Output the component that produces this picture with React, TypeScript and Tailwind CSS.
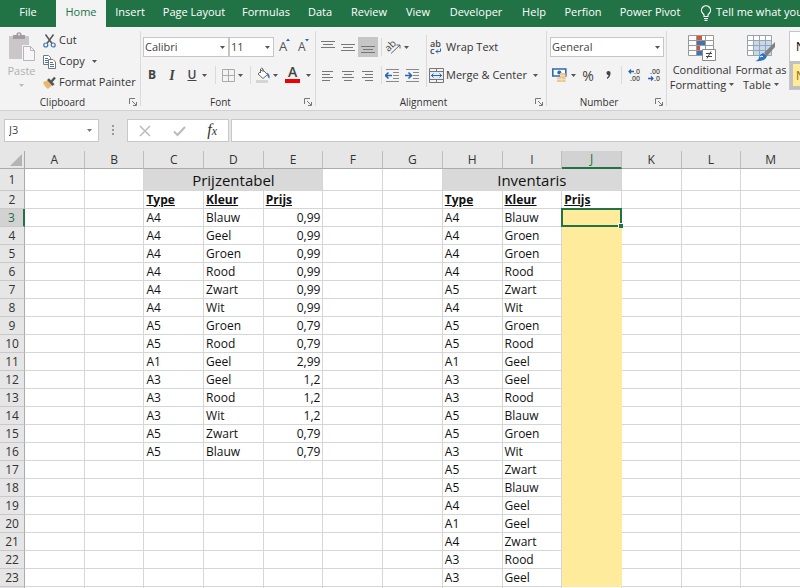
import clsx from 'clsx'
import React, { useState } from 'react'

const tabs = [
  { name: 'File', width: 'w-14' },
  { name: 'Home', width: 'w-[50px]' },
  { name: 'Insert', width: 'w-12' },
  { name: 'Page Layout', width: 'w-20' },
  { name: 'Formulas', width: 'w-16' },
  { name: 'Data', width: 'w-11' },
  { name: 'Review', width: 'w-[54px]' },
  { name: 'View', width: 'w-11' },
  { name: 'Developer', width: 'w-[72px]' },
  { name: 'Help', width: 'w-11' },
  { name: 'Perfion', width: 'w-[54px]' },
  { name: 'Power Pivot', width: 'w-20' },
]

const columns = ['A', 'B', 'C', 'D', 'E', 'F', 'G', 'H', 'I', 'J', 'K', 'L', 'M']

const prices = [
  ['A4', 'Blauw', '0,99'],
  ['A4', 'Geel', '0,99'],
  ['A4', 'Groen', '0,99'],
  ['A4', 'Rood', '0,99'],
  ['A4', 'Zwart', '0,99'],
  ['A4', 'Wit', '0,99'],
  ['A5', 'Groen', '0,79'],
  ['A5', 'Rood', '0,79'],
  ['A1', 'Geel', '2,99'],
  ['A3', 'Geel', '1,2'],
  ['A3', 'Rood', '1,2'],
  ['A3', 'Wit', '1,2'],
  ['A5', 'Zwart', '0,79'],
  ['A5', 'Blauw', '0,79'],
]

const inventory = [
  ['A4', 'Blauw'],
  ['A4', 'Groen'],
  ['A4', 'Groen'],
  ['A4', 'Rood'],
  ['A5', 'Zwart'],
  ['A4', 'Wit'],
  ['A5', 'Groen'],
  ['A5', 'Rood'],
  ['A1', 'Geel'],
  ['A3', 'Geel'],
  ['A3', 'Rood'],
  ['A5', 'Blauw'],
  ['A5', 'Groen'],
  ['A3', 'Wit'],
  ['A5', 'Zwart'],
  ['A5', 'Blauw'],
  ['A4', 'Geel'],
  ['A1', 'Geel'],
  ['A4', 'Zwart'],
  ['A3', 'Rood'],
  ['A3', 'Geel'],
]

const Caret: React.FC<{ className?: string }> = ({ className }) => (
  <svg viewBox="0 0 5 3" className={clsx('h-[3px] w-[5px] shrink-0', className ?? 'text-[#555]')}>
    <path d="M0 0h5L2.500 3z" fill="currentColor" />
  </svg>
)

const Launcher: React.FC<{ label: string }> = ({ label }) => (
  <button aria-label={label} className="absolute right-1 bottom-1">
    <svg viewBox="0 0 8 8" className="h-2 w-2" fill="none" stroke="#777">
      <path d="M.5 6V.5H6M3 3l4 4M7.500 4v3.500H4" />
    </svg>
  </button>
)

type GroupProps = { title: string; className?: string; children: React.ReactNode }

const Group: React.FC<GroupProps> = ({ title, className, children }) => (
  <section className={clsx('relative flex shrink-0 flex-col', className)}>
    <div className="h-[67px]">{children}</div>
    <h2 className="pr-4 text-center text-[10px] leading-4 text-[#333]">{title}</h2>
    <Launcher label={`${title} settings`} />
    <span className="absolute top-1 right-0 bottom-1 w-px bg-[#dadada]" />
  </section>
)

const Divider = () => <span className="h-[18px] w-px bg-[#dadada]" />

// lines of a paragraph icon, as [x, width] per row
const Lines: React.FC<{ rows: [number, number][]; className?: string }> = ({ rows, className }) => (
  <svg viewBox="0 0 14 14" className={clsx('h-3.5 w-3.5', className)}>
    {rows.map(([x, w], i) => (
      <rect key={i} x={x} y={i * 3 + 1} width={w} height="1" fill="#777" />
    ))}
  </svg>
)

const BulbIcon = () => (
  <svg viewBox="0 0 12 16" className="h-4 w-3" fill="none" stroke="#fff" strokeWidth="1.200">
    <path d="M4 11.500V10Q3.800 9 2.600 8.200A4.500 4.500 0 1 1 9.400 8.200Q8.200 9 8 10V11.500Z" />
    <path d="M4 13.500H8M4.500 15.300H7.500" />
  </svg>
)

const PasteIcon = () => (
  <svg viewBox="0 0 28 30" className="h-[30px] w-7">
    <path d="M1 4h20v23H1z" fill="#cac6ca" />
    <path d="M5 3h3.500V1.500Q11 -1 13.500 1.500V3H17v4H5z" fill="#a09ca0" />
    <circle cx="11" cy="2.500" r="1" fill="#eee" />
    <path d="M14 13h10l4 4v13H14z" fill="#f3f3f3" />
    <path d="M15.500 14.500h7l4 4v10h-11z" fill="#f8f6f8" stroke="#b9b5b9" />
    <path d="M22.500 14.500v4h4" fill="none" stroke="#b9b5b9" />
  </svg>
)

const CutIcon = () => (
  <svg viewBox="0 0 13 14" className="h-3.5 w-[13px]" fill="none">
    <path d="M2.500 .5L9 9.500M10.500 .5L4 9.500" stroke="#555" strokeWidth="1.500" />
    <circle cx="2.800" cy="11" r="2" stroke="#4377b5" strokeWidth="1.200" />
    <circle cx="10.200" cy="11" r="2" stroke="#4377b5" strokeWidth="1.200" />
  </svg>
)

const CopyIcon = () => (
  <svg viewBox="0 0 13 14" className="h-3.5 w-[13px]" fill="#fff">
    <path d="M.5 .5h5l2 2v7h-7z" stroke="#777" />
    <path d="M2 3.500h3M2 5.500h3M2 7.500h3" stroke="#4377b5" />
    <path d="M5.500 4.500h4.500l2.500 2.500v6.500h-7z" stroke="#777" />
    <path d="M7 7.500h3M7 9.500h4M7 11.500h4" stroke="#4377b5" />
  </svg>
)

const PainterIcon = () => (
  <svg viewBox="0 0 13 13" className="h-[13px] w-[13px]">
    <path d="M0 6l4.500-1.500 4.500 5-4 3.500Q1.500 11 0 6z" fill="#e8b96c" />
    <path d="M4 4l2-1.800 5.500 6L9.500 10z" fill="#555" />
    <path d="M8.500 5.500l3.500-4" stroke="#555" strokeWidth="2.400" />
  </svg>
)

const BordersIcon = () => (
  <svg viewBox="0 0 13 13" className="h-[13px] w-[13px]" fill="none" stroke="#aaa">
    <path d="M.5 .5h12v12H.5zM6.500 1v11M1 6.500h11" />
  </svg>
)

const FillIcon = () => (
  <svg viewBox="0 0 14 16" className="h-4 w-3.5" fill="none">
    <path d="M6.500 2.500l5 5-4.500 4-5-4.500z" fill="#fff" stroke="#666" />
    <path d="M4.500 6V2Q5.500 0 7 2v3" stroke="#666" />
    <path d="M11 5.500q3.500 2 2.500 6-2.500-1-2.500-6z" fill="#4377b5" />
    <path d="M0 13h12v3H0z" fill="#d5d5d5" />
  </svg>
)

const OrientationIcon = () => (
  <svg viewBox="0 0 18 16" className="h-4 w-[18px]" fill="none" stroke="#666">
    <text x="1" y="11" transform="rotate(-45 5 9)" fontSize="10" fill="#444" stroke="none">
      ab
    </text>
    <path d="M6 14.500L15 6M11.500 6H15V9.500" />
  </svg>
)

const IndentIcon: React.FC<{ outdent?: boolean }> = ({ outdent }) => (
  <svg viewBox="0 0 15 13" className="h-[13px] w-[15px]" fill="none">
    <path d="M1 .5h13M8 3.500h6M8 6.500h6M8 9.500h6M1 12.500h13" stroke="#888" />
    <path
      d={outdent ? 'M7 6.500H1M3.500 3.500l-3 3 3 3' : 'M0 6.500h6M3.500 3.500l3 3-3 3'}
      stroke="#2b65b0"
      strokeWidth="1.600"
    />
  </svg>
)

const WrapIcon = () => (
  <svg viewBox="0 0 13 15" className="h-[15px] w-[13px]">
    <text x="1" y="7" fontSize="9" fontWeight="600" fill="#444">
      ab
    </text>
    <text x="1" y="14" fontSize="9" fontWeight="600" fill="#444">
      c
    </text>
    <path d="M11.500 8.500v3H7M9 9.500l-2 2 2 2" fill="none" stroke="#2b65b0" />
  </svg>
)

const MergeIcon = () => (
  <svg viewBox="0 0 15 15" className="h-[15px] w-[15px]" fill="none">
    <path d="M.5 .5h14v14H.5zM.5 3.500h14M.5 11.500h14M7.500 .5v3M7.500 11.500v3" stroke="#777" />
    <path d="M1 4h13v7H1z" fill="#e3edf8" />
    <path d="M2 7.500h11M4.500 5.500l-2 2 2 2M10.500 5.500l2 2-2 2" stroke="#2b65b0" />
  </svg>
)

const MoneyIcon = () => (
  <svg viewBox="0 0 15 14" className="h-3.5 w-[15px]">
    <path d="M.8 1h13v7H.8z" fill="#fff" stroke="#2f68b4" strokeWidth="1.600" />
    <circle cx="7.300" cy="4.500" r="2" fill="#2f68b4" />
    <path d="M8 5h5.500v9H5V9.500h3z" fill="#ecc891" />
    <path d="M8 7.500h5.500M5 11.500h8.500M9.500 9.500v4" stroke="#f8ead2" strokeWidth=".7" />
  </svg>
)

const DecimalIcon: React.FC<{ decrease?: boolean }> = ({ decrease }) => (
  <svg viewBox="0 0 13 14" className="h-3.5 w-[13px]">
    <text x={decrease ? 2 : 6} y="6" fontSize="7" fontWeight="600" fill="#555">
      {decrease ? '.00' : '.0'}
    </text>
    <text x={decrease ? 6 : 2} y="13" fontSize="7" fontWeight="600" fill="#555">
      {decrease ? '.0' : '.00'}
    </text>
    <path
      d={decrease ? 'M0 10.500h5M3 8.500l2 2-2 2' : 'M1 3.500h5M3 1.500l-2 2 2 2'}
      fill="none"
      stroke="#2b65b0"
      strokeWidth="1.300"
    />
  </svg>
)

const ConditionalIcon = () => (
  <svg viewBox="0 0 28 27" className="h-[27px] w-7">
    <path d="M.5 .5h25v20H.5z" fill="#fff" />
    <path d="M8 1h6v5H8zM8 11h4v5H8z" fill="#d9532c" />
    <path d="M8 6h9v5H8zM8 16h6v5H8z" fill="#3c75ba" />
    <path
      d="M.5 .5h25v20H.5zM.5 5.500h25M.5 10.500h25M.5 15.500h25M8.500 .5v20M17.500 .5v20"
      fill="none"
      stroke="#999"
    />
    <path d="M14.500 14.500h13v11h-13z" fill="#fff" stroke="#888" />
    <path d="M18 18.500h6M18 21.500h6M23 16.500l-4 7" stroke="#444" />
  </svg>
)

const TableIcon = () => (
  <svg viewBox="0 0 29 27" className="h-[27px] w-[29px]">
    <path d="M.5 .5h24v20H.5z" fill="#fff" />
    <path d="M6 6h19v15H6z" fill="#c3d9ee" />
    <path
      d="M.5 .5h24v20H.5zM.5 5.500h24M.5 10.500h24M.5 15.500h24M6.500 .5v20M12.500 .5v20M18.500 .5v20"
      fill="none"
      stroke="#9aa3ac"
    />
    <path d="M28 7v5l-8 9-3-3z" fill="#808080" />
    <path d="M16 18l4 3q-2 6-12 5 4-1 4-4 1-3 4-4z" fill="#2f73bd" />
    <path d="M13 22l2-1 1 1" stroke="#fff" fill="none" />
  </svg>
)

type SelectProps = { label: string; value: string; className: string }

const Select: React.FC<SelectProps> = ({ label, value, className }) => (
  <span className={clsx('relative flex items-center', className)}>
    <select
      aria-label={label}
      className="h-5 w-full appearance-none border border-[#c6c6c6] bg-white px-px text-[11px] leading-[18px] text-[#444] outline-none"
    >
      <option>{value}</option>
    </select>
    <Caret className="pointer-events-none absolute right-1 text-[#555]" />
  </span>
)

const iconButton = 'flex h-5 w-5 shrink-0 items-center justify-center'

const Ribbon = () => (
  <div className="flex h-[84px] shrink-0 overflow-hidden border-b border-[#d0d0d0] bg-[#f3f3f3]">
    <Group title="Clipboard" className="w-[141px]">
      <div className="flex gap-1 pt-[3px]">
        <button className="flex w-[39px] flex-col items-center pt-0.5 pl-1 text-[11px] text-[#b0b0b0]">
          <PasteIcon />
          <span className="leading-[18px]">Paste</span>
          <Caret className="mt-1 text-[#bbb]" />
        </button>
        <div className="flex flex-col text-[11px] text-[#333]">
          <button className="flex h-[21px] items-center gap-[3px]">
            <CutIcon />
            Cut
          </button>
          <button className="flex h-[21px] items-center gap-[3px]">
            <CopyIcon />
            Copy
            <Caret className="ml-1 text-[#555]" />
          </button>
          <button className="flex h-[21px] items-center gap-[3px]">
            <PainterIcon />
            <span className="whitespace-nowrap">Format Painter</span>
          </button>
        </div>
      </div>
    </Group>

    <Group title="Font" className="w-[175px]">
      <div className="flex pt-2.5 pl-0.5">
        <Select label="Font name" value="Calibri" className="w-[86px]" />
        <Select label="Font size" value="11" className="w-[45px]" />
        <button aria-label="Increase font size" className={iconButton}>
          <svg viewBox="0 0 14 20" className="h-5 w-3.5">
            <text x="2" y="14" fontSize="13" fontWeight="500" fill="#555">
              A
            </text>
            <path d="M9 4l2-2.500L13 4z" fill="#2b65b0" />
          </svg>
        </button>
        <button aria-label="Decrease font size" className={iconButton}>
          <svg viewBox="0 0 14 20" className="h-5 w-3.5">
            <text x="1" y="14" fontSize="12" fontWeight="500" fill="#555">
              A
            </text>
            <path d="M8 2l2 2.500L12 2z" fill="#2b65b0" />
          </svg>
        </button>
      </div>
      <div className="flex items-center pt-2 pl-px text-[12px] text-[#444]">
        <button className={clsx(iconButton, 'font-bold')}>B</button>
        <button className={clsx(iconButton, "font-['Liberation_Serif',serif] text-[14px] font-bold italic")}>
          I
        </button>
        <button className={clsx(iconButton, 'font-semibold underline')}>U</button>
        <Caret />
        <span className="w-2" />
        <Divider />
        <button aria-label="Borders" className={clsx(iconButton, 'ml-0.5')}>
          <BordersIcon />
        </button>
        <Caret />
        <span className="w-[7px]" />
        <Divider />
        <button aria-label="Fill colour" className={clsx(iconButton, 'ml-0.5')}>
          <FillIcon />
        </button>
        <Caret />
        <button aria-label="Font colour" className={clsx(iconButton, 'mx-1')}>
          <svg viewBox="0 0 15 20" className="h-5 w-[15px]">
            <text x="3" y="12" fontSize="14" fontWeight="600" fill="#444">
              A
            </text>
            <path d="M0 14h15v4H0z" fill="#f00000" />
          </svg>
        </button>
        <Caret />
      </div>
    </Group>

    <Group title="Alignment" className="w-[231px]">
      <div className="flex gap-0.5">
        <div>
          <div className="flex items-center pt-2.5 pl-0.5">
            <button aria-label="Top align" className={iconButton}>
              <Lines rows={[[0, 14], [2, 10], [0, 14]]} />
            </button>
            <button aria-label="Middle align" className={iconButton}>
              <Lines rows={[[0, 14], [2, 10], [0, 14]]} className="mt-1.5" />
            </button>
            <button aria-label="Bottom align" className={clsx(iconButton, 'bg-[#c6c6c6]')}>
              <Lines rows={[[0, 14], [2, 10], [0, 14]]} className="mt-2.5" />
            </button>
            <span className="w-[3px]" />
            <Divider />
            <button aria-label="Orientation" className={clsx(iconButton, 'ml-0.5')}>
              <OrientationIcon />
            </button>
            <Caret />
          </div>
          <div className="flex items-center pt-2 pl-0.5">
            <button aria-label="Align left" className={iconButton}>
              <Lines rows={[[1, 11], [1, 8], [1, 11], [1, 8]]} className="mt-1" />
            </button>
            <button aria-label="Center" className={iconButton}>
              <Lines rows={[[1, 12], [3, 8], [1, 12], [3, 8]]} className="mt-1" />
            </button>
            <button aria-label="Align right" className={iconButton}>
              <Lines rows={[[1, 11], [4, 8], [1, 11], [4, 8]]} className="mt-1" />
            </button>
            <span className="w-[3px]" />
            <Divider />
            <button aria-label="Decrease indent" className={iconButton}>
              <IndentIcon outdent />
            </button>
            <button aria-label="Increase indent" className={iconButton}>
              <IndentIcon />
            </button>
          </div>
        </div>
        <span className="mt-2 ml-0.5 h-[52px] w-px bg-[#dadada]" />
        <div className="flex flex-col gap-2 pt-2.5 text-[11px] text-[#333]">
          <button className="flex h-5 items-center gap-1 whitespace-nowrap">
            <WrapIcon />
            Wrap Text
          </button>
          <button className="flex h-5 items-center gap-0.5 whitespace-nowrap">
            <MergeIcon />
            Merge & Center
            <Caret className="ml-1 text-[#555]" />
          </button>
        </div>
      </div>
    </Group>

    <Group title="Number" className="w-[120px]">
      <div className="px-[3px] pt-2.5">
        <Select label="Number format" value="General" className="w-full" />
      </div>
      <div className="flex items-center pt-2 pl-0.5 text-[#444]">
        <button aria-label="Accounting format" className={iconButton}>
          <MoneyIcon />
        </button>
        <span className="w-0.5" />
        <Caret />
        <button className={clsx(iconButton, 'ml-0.5 text-[14px]')}>%</button>
        <button aria-label="Comma style" className={iconButton}>
          <svg viewBox="0 0 5 8" className="h-2 w-[5px]">
            <path d="M2.500 0a2 2 0 012 2.200Q4.500 6 1 8V6.500Q2.500 5.500 2.500 4.200A2 2 0 012.500 0z" fill="#444" />
          </svg>
        </button>
        <span className="w-[3px]" />
        <Divider />
        <button aria-label="Increase decimal" className={clsx(iconButton, 'ml-0.5')}>
          <DecimalIcon />
        </button>
        <button aria-label="Decrease decimal" className={iconButton}>
          <DecimalIcon decrease />
        </button>
      </div>
    </Group>

    <div className="flex flex-1 gap-0.5 pt-2 pl-1 text-[11px] leading-[15px] text-[#333]">
      <button className="flex w-[62px] shrink-0 flex-col items-center">
        <ConditionalIcon />
        <span>Conditional</span>
        <span className="flex items-center gap-[3px]">
          Formatting <Caret />
        </span>
      </button>
      <button className="flex w-[52px] shrink-0 flex-col items-center">
        <TableIcon />
        <span className="whitespace-nowrap">Format as</span>
        <span className="flex items-center gap-[3px]">
          Table <Caret />
        </span>
      </button>
      <div className="-mt-1 h-[59px] w-40 shrink-0 border border-[#c6c6c6] bg-white text-[12px]">
        <button className="block h-[29px] w-full pl-1.5 text-left text-black">Normal</button>
        <button className="block h-7 w-full border-[3px] border-[#c0c0c0] bg-[#ffeb9c] pl-[3px] text-left text-[#9c6500]">
          Neutral
        </button>
      </div>
    </div>
  </div>
)

const FormulaBar = () => (
  <div className="flex h-10 shrink-0 items-start bg-[#e6e6e6] pt-2 pl-1">
    <div className="flex h-[23px] w-[95px] items-center border border-[#c8c8c8] bg-white px-1">
      <input
        aria-label="Name box"
        defaultValue="J3"
        className="w-full min-w-0 bg-transparent text-[11px] text-[#444] outline-none"
      />
      <Caret className="mr-0.5 text-[#777]" />
    </div>
    <svg viewBox="0 0 28 23" className="h-[23px] w-7" fill="#999">
      <path d="M13 6h2v2h-2zM13 10h2v2h-2zM13 14h2v2h-2z" />
    </svg>
    <div className="flex h-[23px] w-[102px] items-center justify-around border border-[#c8c8c8] bg-white">
      <button aria-label="Cancel">
        <svg viewBox="0 0 12 12" className="h-3 w-3" stroke="#bbb" strokeWidth="1.500">
          <path d="M1 1l10 10M11 1L1 11" />
        </svg>
      </button>
      <button aria-label="Enter">
        <svg viewBox="0 0 13 12" className="h-3 w-[13px]" fill="none" stroke="#bbb" strokeWidth="2">
          <path d="M1 6.500L4.500 10L12 2" />
        </svg>
      </button>
      <button className="font-['Liberation_Serif',serif] text-[16px] leading-5 text-[#333] italic">
        f<span className="text-[12px]">x</span>
      </button>
    </div>
    <input
      aria-label="Formula"
      className="ml-0.5 h-[23px] min-w-0 flex-1 border border-r-0 border-[#c8c8c8] bg-white px-1 text-[11px] outline-none"
    />
  </div>
)

const grid = 'border-r border-b border-[#d6d6d6] px-0.5 py-0 whitespace-nowrap'
const yellow = 'border-r border-b border-[#ffeb9c] bg-[#ffeb9c] p-0'
const heading = 'text-left font-bold underline'

const RowNumber: React.FC<{ n: number; active?: boolean }> = ({ n, active }) => (
  <th
    scope="row"
    className={clsx(
      'border-b border-b-[#c9c9c9] p-0 text-center text-[12px] font-normal',
      active
        ? 'border-r-2 border-r-[#217346] bg-[#d2d2d2] text-[#217346]'
        : 'border-r border-r-[#ababab] bg-[#e6e6e6] text-[#333]'
    )}
  >
    {n}
  </th>
)

const Empty: React.FC<{ count: number }> = ({ count }) => (
  <>
    {Array.from({ length: count }, (_, i) => (
      <td key={i} className={grid} />
    ))}
  </>
)

const Sheet = () => (
  <div className="min-h-0 flex-1 overflow-hidden">
    <table className="w-[calc(100%+1px)] table-fixed border-separate border-spacing-0 font-['Open_Sans',sans-serif] text-[12px] leading-4 text-[#111]">
      <colgroup>
        <col className="w-[25px]" />
        {columns.map((c) => (
          <col key={c} />
        ))}
      </colgroup>
      <thead>
        <tr className="h-[18px] bg-[#e6e6e6] text-[#333]">
          <th aria-label="Select all" className="border-r border-b border-[#ababab] p-0">
            <svg viewBox="0 0 12 12" className="ml-auto h-3 w-3.5 pr-0.5">
              <path d="M12 0v12H0z" fill="#b4b4b4" />
            </svg>
          </th>
          {columns.map((c) => (
            <th
              key={c}
              scope="col"
              className={clsx(
                'border-r border-r-[#bdbdbd] p-0 font-normal',
                c === 'J'
                  ? 'border-b-2 border-b-[#217346] bg-[#d2d2d2] text-[#217346]'
                  : 'border-b border-b-[#ababab]'
              )}
            >
              {c}
            </th>
          ))}
        </tr>
      </thead>
      <tbody>
        <tr className="h-[22px] text-center text-[15px] leading-5">
          <RowNumber n={1} />
          <Empty count={2} />
          <td colSpan={3} className={clsx(grid, 'bg-[#d9d9d9]')}>
            Prijzentabel
          </td>
          <Empty count={2} />
          <td colSpan={3} className={clsx(grid, 'bg-[#d9d9d9]')}>
            Inventaris
          </td>
          <Empty count={3} />
        </tr>
        <tr className="h-[18px]">
          <RowNumber n={2} />
          <Empty count={2} />
          <td className={clsx(grid, heading)}>Type</td>
          <td className={clsx(grid, heading)}>Kleur</td>
          <td className={clsx(grid, heading)}>Prijs</td>
          <Empty count={2} />
          <td className={clsx(grid, heading)}>Type</td>
          <td className={clsx(grid, heading)}>Kleur</td>
          <td className={clsx(grid, heading)}>Prijs</td>
          <Empty count={3} />
        </tr>
        {inventory.map(([type, color], i) => {
          const price = prices[i] ?? ['', '', '']
          return (
            <tr key={i} className="h-[18px]">
              <RowNumber n={i + 3} active={i === 0} />
              <Empty count={2} />
              <td className={grid}>{price[0]}</td>
              <td className={grid}>{price[1]}</td>
              <td className={clsx(grid, 'text-right')}>{price[2]}</td>
              <Empty count={2} />
              <td className={grid}>{type}</td>
              <td className={grid}>{color}</td>
              <td className={clsx(yellow, i === 0 && 'relative')}>
                {/* selection frame with its fill handle */}
                {i === 0 && (
                  <div className="absolute -inset-px border-2 border-[#217346]">
                    <span className="absolute -right-[3px] -bottom-[3px] h-[5px] w-[5px] border-t border-l border-white bg-[#217346]" />
                  </div>
                )}
              </td>
              <Empty count={3} />
            </tr>
          )
        })}
        <tr className="h-[18px]">
          <RowNumber n={24} />
          <Empty count={13} />
        </tr>
      </tbody>
    </table>
  </div>
)

export default function App() {
  const [active, setActive] = useState('Home')

  return (
    <div className="flex h-screen flex-col overflow-hidden bg-white font-['Open_Sans',sans-serif]">
      <nav className="flex h-[27px] shrink-0 overflow-hidden bg-[#217346] text-[11px] text-white">
        {tabs.map(({ name, width }) => (
          <button
            key={name}
            onClick={() => setActive(name)}
            className={clsx(
              'shrink-0 pb-0.5 whitespace-nowrap',
              width,
              name === active && 'bg-[#f3f3f3] text-[#217346]'
            )}
          >
            {name}
          </button>
        ))}
        <button className="flex shrink-0 items-center gap-1 pb-0.5 pl-2.5 whitespace-nowrap">
          <BulbIcon />
          Tell me what you want to do
        </button>
      </nav>
      <Ribbon />
      <FormulaBar />
      <Sheet />
    </div>
  )
}
